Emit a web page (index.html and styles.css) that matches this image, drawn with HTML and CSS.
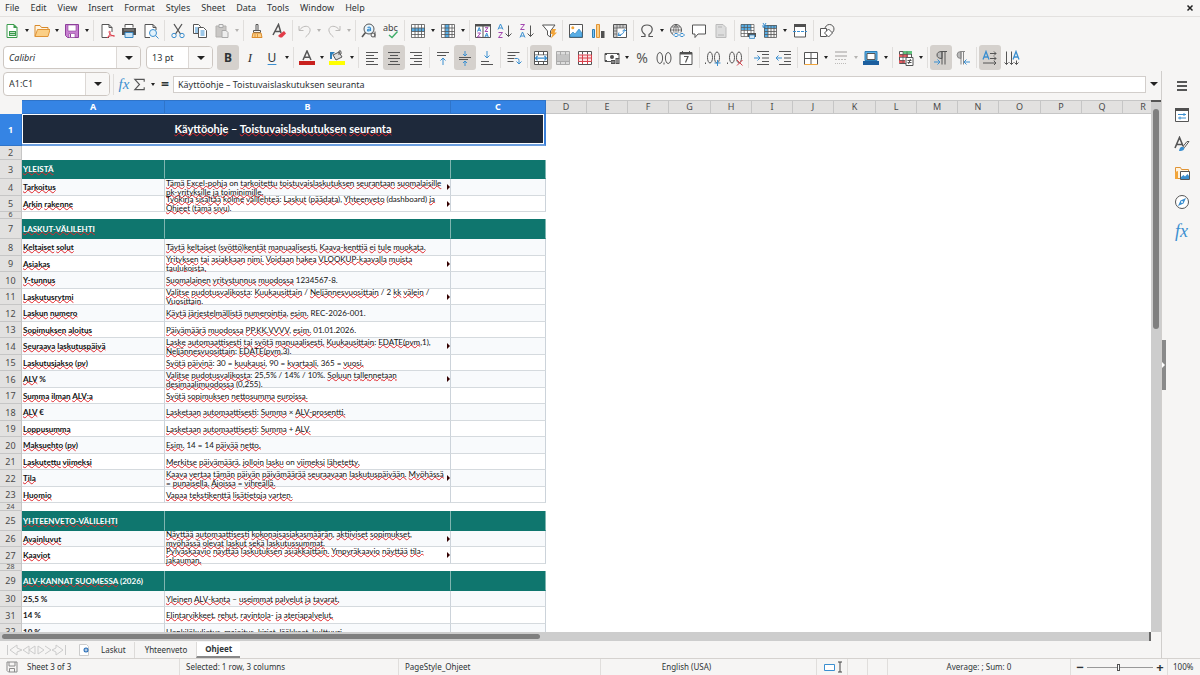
FILE: index.html
```html
<!DOCTYPE html>
<html lang="en">
<head>
<meta charset="utf-8">
<title>Spreadsheet – Ohjeet</title>
<link rel="stylesheet" href="styles.css">
</head>
<body>
<nav class="menubar">
  <button>File</button><button>Edit</button><button>View</button><button>Insert</button><button>Format</button><button>Styles</button><button>Sheet</button><button>Data</button><button>Tools</button><button>Window</button><button>Help</button>
  <button class="close" aria-label="Close document"><svg viewBox="0 0 8 8"><path d="M1.500 1.500l5 5M6.500 1.500l-5 5" stroke="#222" stroke-width="1.500"/></svg></button>
</nav>

<div class="toolbar" role="toolbar" aria-label="Standard">
  <button class="tool" aria-label="New"><svg viewBox="0 0 16 16"><path class="gn" d="M3 1.500h7l3 3v10H3z" fill="#fff"/><path d="M9.500 1v4h4z" fill="#3a9b4c"/><path d="M5 8h7v5H5z" fill="#3a9b4c"/><path d="M6 9.500h5M6 11.500h5" stroke="#fff" stroke-width=".7"/></svg></button><button class="arrow" aria-label="New options"></button>
  <button class="tool" aria-label="Open"><svg viewBox="0 0 16 16"><path d="M1 13.500V2.500h5l1.500 2H14v3" fill="#fff3df" stroke="#d98a2b"/><path d="M1 13.500l2.500-7H16l-2 7z" fill="#fbcf86" stroke="#e09436"/></svg></button><button class="arrow" aria-label="Recent files"></button>
  <button class="tool" aria-label="Save"><svg viewBox="0 0 16 16"><path d="M1.500 1.500h13v13h-11l-2-2z" fill="#c77fd0" stroke="#8e3f9b"/><path d="M4 2h8v6H4z" fill="#fff" stroke="#8e3f9b" stroke-width=".6"/><path d="M5 10.500h6v4H5z" fill="#fff" stroke="#8e3f9b" stroke-width=".6"/><path d="M6.500 11v3" stroke="#8e3f9b"/></svg></button><button class="arrow" aria-label="Save options"></button>
  <span class="sep"></span>
  <button class="tool" aria-label="Export as PDF"><svg viewBox="0 0 16 16"><path class="g" d="M10 14.500H3v-13h7l3 3V9M10 1.500v3h3" fill="#fff"/><path d="M8 15c3-3 4-6 2.500-7-1.500 1 1 5 5 5-3-1-6 0-7.500 2z" fill="none" stroke="#dc3c4a"/></svg></button>
  <button class="tool" aria-label="Print"><svg viewBox="0 0 16 16"><path class="g" d="M4 4.500v-3h8v3" fill="#fff"/><path d="M1 5h14v7H1z" fill="#505050"/><path d="M3 7h10" stroke="#aaa" stroke-width=".8"/><path d="M4 9.500h8v5H4z" fill="#cde6f7" stroke="#3b88c3"/></svg></button>
  <button class="tool" aria-label="Print preview"><svg viewBox="0 0 16 16"><path class="g" d="M7 14.500H2v-13h8l3 3V7M10 1.500v3h3" fill="#fff"/><circle class="b" cx="10" cy="10" r="3.500" fill="#e3f2fb"/><path class="b" d="M12.500 12.500l3 3"/></svg></button>
  <span class="sep"></span>
  <button class="tool" aria-label="Cut"><svg viewBox="0 0 16 16"><path class="g" d="M4 1l6.500 10M12 1L5.500 11" stroke-width="1.300"/><circle class="b" cx="4" cy="12.500" r="2.200"/><circle class="b" cx="12" cy="12.500" r="2.200"/></svg></button>
  <button class="tool" aria-label="Copy"><svg viewBox="0 0 16 16"><path class="g" d="M1.500 1.500h5l2 2v7h-7z" fill="#fff"/><path class="b" d="M3 5h3M3 7h3M3 9h3"/><path class="g" d="M6.500 4.500h5l3 3v7h-8z" fill="#fff"/><path class="b" d="M8.500 8h4M8.500 10h4M8.500 12h4"/></svg></button>
  <button class="tool" aria-label="Paste" disabled><svg viewBox="0 0 16 16"><path d="M2 3h10v11H2z" fill="#c9c7c5" stroke="#b3b1af"/><path d="M5 1.500h4v3H5z" fill="#eee" stroke="#aaa"/><path d="M8 7.500h4l2 2v5H8z" fill="#eee" stroke="#aaa"/></svg></button><button class="arrow off" aria-label="Paste options"></button>
  <span class="sep"></span>
  <button class="tool" aria-label="Clone formatting"><svg viewBox="0 0 16 16"><path class="g" d="M7 1.500h2v6H7zM4.500 7.500h7v2h-7z"/><path d="M4 10h8l1 4.500H3z" fill="#fbd08b" stroke="#dc8b2b"/><path d="M6 11v3M8.500 11v3" stroke="#dc8b2b" stroke-width=".8"/></svg></button>
  <button class="tool" aria-label="Clear formatting"><svg viewBox="0 0 16 16"><path class="g" d="M2 12L7.500 1.500 10 10M4 8.500h5" stroke-width="1.500"/><path d="M9 11l4-3 2 2.500-4 4H9l-2-1.500z" fill="#e23c48"/></svg></button>
  <span class="sep"></span>
  <button class="tool narrow" aria-label="Undo" disabled><svg viewBox="0 0 16 16"><path class="d" d="M2 3v4.500h4.500M2.500 7C7 1 14 3 13 8c-.4 2-2 4-4.500 6"/></svg></button><button class="arrow off" aria-label="Undo list"></button>
  <button class="tool" aria-label="Redo" disabled><svg viewBox="0 0 16 16"><path class="d" d="M14 3v4.500H9.500M13.500 7C9 1 2 3 3 8c.4 2 2 4 4.500 6"/></svg></button><button class="arrow off" aria-label="Redo list"></button>
  <span class="sep"></span>
  <button class="tool" aria-label="Find and replace"><svg viewBox="0 0 16 16"><circle class="g" cx="8" cy="6" r="5" fill="#e9f5fc"/><path class="g" d="M4.500 9.500L1 14" stroke-width="1.600"/><path class="b" d="M6.500 4.500q3-1 3 1v2.500M9.500 6q-3 0-3 1.200t3 .3" stroke-width="1.200"/><circle class="g" cx="12" cy="12" r="2"/><path class="g" d="M14 8.500v6"/></svg></button>
  <button class="tool" aria-label="Spelling"><svg viewBox="0 0 16 16"><text x="0" y="8" class="abc">abc</text><path d="M6 12l3 2.500 5.500-6" fill="none" stroke="#3fae6a" stroke-width="1.400"/></svg></button>
  <span class="sep"></span>
  <button class="tool" aria-label="Row"><svg viewBox="0 0 16 16"><path d="M1.500 1.500h13v13h-13z" fill="#fff"/><path d="M1 5h14v3.500H1z" fill="#58aee6"/><path class="g" d="M1.500 1.500h13v13h-13zM1.500 5h13M1.500 8.500h13M1.500 11.500h13M5 1.500v13M8.200 1.500v13M11.500 1.500v13" stroke-width=".8"/></svg></button><button class="arrow" aria-label="Row options"></button>
  <button class="tool" aria-label="Column"><svg viewBox="0 0 16 16"><path d="M1.500 1.500h13v13h-13z" fill="#fff"/><path d="M5 1h4v14H5z" fill="#58aee6"/><path class="g" d="M1.500 1.500h13v13h-13zM1.500 5h13M1.500 8.500h13M1.500 11.500h13M5 1.500v13M9 1.500v13M12 1.500v13" stroke-width=".8"/></svg></button><button class="arrow" aria-label="Column options"></button>
  <span class="sep"></span>
  <button class="tool" aria-label="Sort"><svg viewBox="0 0 16 16"><path class="g" d="M.5 1.500h15v13H.5zM8 2v12" fill="#fff"/><path d="M0 1h16v2.500H0z" fill="#505050"/><path class="b" d="M2.500 8.500L4.200 4.500l1.600 4M3 7.200h2.500M10 14l1.700-4 1.600 4M10.500 12.800H13"/><path class="p" d="M2.500 10h3l-3 4h3M10 4.700h3l-3 3.800h3"/></svg></button>
  <button class="tool" aria-label="Sort ascending"><svg viewBox="0 0 16 16"><path class="b" d="M1 6.500L3.500 1 6 6.500M2 5h3"/><path class="p" d="M1.500 9.500h4l-4 5h4"/><path class="g" d="M11.500 2.500v11M8.500 10.500l3 3 3-3"/></svg></button>
  <button class="tool" aria-label="Sort descending"><svg viewBox="0 0 16 16"><path class="p" d="M1.500 1.500h4l-4 5h4"/><path class="b" d="M1 14.500L3.500 9 6 14.500M2 13h3"/><path class="g" d="M11.500 2.500v11M8.500 10.500l3 3 3-3"/></svg></button>
  <button class="tool" aria-label="AutoFilter"><svg viewBox="0 0 16 16"><path class="g" d="M1.500 2h12.500L9.500 8v6l-3-2V8z" fill="#fff"/><path d="M11 6h4l-1.500 3.500H16l-6 6 1.500-4.500H9.500z" fill="#f2a53a"/></svg></button>
  <span class="sep"></span>
  <button class="tool" aria-label="Insert image"><svg viewBox="0 0 16 16"><path class="g" d="M1.500 1.500h13v13h-13z" fill="#fff"/><path d="M2 14v-2l3-3 2 2 4-5 3 4v4z" fill="#58aee6" stroke="#2c7fb9" stroke-width=".6"/><circle cx="4.800" cy="4.800" r="1.500" fill="#f2a53a"/></svg></button>
  <button class="tool" aria-label="Insert chart"><svg viewBox="0 0 16 16"><path d="M2.500 6.500h2v8h-2z" fill="#7dc3ee" stroke="#2c7fb9"/><path d="M6.500 1.500h3v13h-3z" fill="#fbcf86" stroke="#e09436"/><path d="M11 8h3.500v7H11z" fill="#505050"/></svg></button>
  <button class="tool" aria-label="Insert pivot table"><svg viewBox="0 0 16 16"><path class="g" d="M1.500 1.500h13v13h-13z" fill="#fff"/><path d="M2 2h12v3H5v9H2z" fill="#c8c8c8"/><path class="g" d="M5 2v12M2 5h12M8 2v3M11 2v3M2 8h3M2 11h3" stroke-width=".7"/><path class="b" d="M7 9.500l-1 3h3M6.500 12q5 0 6-5M10.500 8l2-1.500 2 2"/></svg></button>
  <span class="sep"></span>
  <button class="tool" aria-label="Special character"><svg viewBox="0 0 16 16"><path class="g" d="M2 13.500h4v-2C1 8 2 2 8 2s7 6 2 9.500v2h4" stroke-width="1.200"/></svg></button><button class="arrow" aria-label="Recent characters"></button>
  <button class="tool" aria-label="Insert hyperlink"><svg viewBox="0 0 16 16"><circle class="g" cx="7" cy="7" r="5.500"/><path class="g" d="M7 1.500v11M1.500 7h11M3 4h8M3 10h8M7 1.500q-5 5.500 0 11M7 1.500q5 5.500 0 11" stroke-width=".7"/><path d="M4 9.500h12v5H4z" fill="#f6f5f4"/><path class="b" d="M8.500 10.500H6q-3 1.500 0 3h2.500M11.500 10.500H14q3 1.500 0 3h-2.500M8 12h4"/></svg></button>
  <button class="tool" aria-label="Insert comment"><svg viewBox="0 0 16 16"><path class="g" d="M1.500 2h13v9H7l-3 3.500V11H1.500z" fill="#fff"/></svg></button>
  <button class="tool" aria-label="Headers and footers" disabled><svg viewBox="0 0 16 16"><path d="M3 1.500h7l3 3v10H3z" fill="#ddd" stroke="#bbb"/><path d="M5 4h4M5 12h6" stroke="#b5b5b5"/></svg></button>
  <span class="sep"></span>
  <button class="tool" aria-label="Define print area"><svg viewBox="0 0 16 16"><path d="M1.500 1.500h12v12h-12z" fill="#fff"/><path d="M1 1h10v6H1z" fill="#58aee6"/><path class="g" d="M1 1.500h13v12H1zM1 4.500h13M1 7.500h13M1 10.500h13M4.200 1.500v12M7.500 1.500v12M11 1.500v12" stroke-width=".7" fill-opacity="0" fill="#fff"/><path d="M8 10h8v4H8z" fill="#505050"/><path d="M9.500 12h5v3.500h-5z" fill="#cde6f7" stroke="#3b88c3" stroke-width=".8"/></svg></button>
  <button class="tool" aria-label="Freeze rows and columns"><svg viewBox="0 0 16 16"><path d="M3 2h12v3H6v9H2V5z" fill="#58aee6"/><path class="g" d="M2.500 2.500h12v12h-12zM2.500 5.500h12M2.500 8.500h12M2.500 11.500h12M6 2.500v12M9 2.500v12M12 2.500v12" stroke-width=".8"/><path class="b" d="M0 3h5M1 0l3 5M4 0L1 5"/></svg></button><button class="arrow" aria-label="Freeze options"></button>
  <button class="tool" aria-label="Split window"><svg viewBox="0 0 16 16"><path class="g" d="M2.500 3v11h11V3z" fill="#fff"/><path d="M2 1h12v3H2z" fill="#505050"/><path class="b" d="M1 8.500h14" stroke-dasharray="3 1"/></svg></button>
  <span class="sep"></span>
  <button class="tool" aria-label="Show draw functions"><svg viewBox="0 0 16 16"><circle class="g" cx="10.500" cy="6" r="4.500"/><path class="g" d="M1.500 5.500h6v8h-6z" fill="#fff"/><path class="g" d="M9.500 6l4 4-4 4-4-4z" fill="#fff"/></svg></button>
</div>

<div class="toolbar" role="toolbar" aria-label="Formatting">
  <div class="combo font"><input type="text" value="Calibri" aria-label="Font name"><button aria-label="Choose font"></button></div>
  <div class="combo size"><input type="text" value="13 pt" aria-label="Font size"><button aria-label="Choose size"></button></div>
  <button class="tool on bold" aria-pressed="true">B</button>
  <button class="tool italic">I</button>
  <button class="tool under">U</button><button class="arrow" aria-label="Underline options"></button>
  <span class="sep"></span>
  <button class="tool" aria-label="Font color"><svg viewBox="0 0 16 16"><path class="g" d="M4 10L8 1l4 9M5.200 7.200h5.600" stroke-width="1.500"/><path d="M0 11h16v4H0z" fill="#c9211e"/></svg></button><button class="arrow" aria-label="Font color options"></button>
  <button class="tool" aria-label="Highlighting"><svg viewBox="0 0 16 16"><path class="g" d="M4 5l6-3 3 5-6 3z" fill="#ddd"/><path class="g" d="M10 5V1q2-1 2 1v2"/><path d="M1 2h5L3 5v4H1z" fill="#2d7fbb"/><path d="M0 11h16v4H0z" fill="#ff0"/></svg></button><button class="arrow" aria-label="Highlighting options"></button>
  <span class="sep"></span>
  <button class="tool" aria-label="Align left"><svg viewBox="0 0 16 16"><path class="g" d="M2 2.500h12M2 5.500h8M2 8.500h12M2 11.500h8M2 14.500h12"/></svg></button>
  <button class="tool on" aria-label="Center horizontally"><svg viewBox="0 0 16 16"><path class="g" d="M2 2.500h12M4 5.500h8M2 8.500h12M4 11.500h8M2 14.500h12"/></svg></button>
  <button class="tool" aria-label="Align right"><svg viewBox="0 0 16 16"><path class="g" d="M2 2.500h12M6 5.500h8M2 8.500h12M6 11.500h8M2 14.500h12"/></svg></button>
  <span class="sep"></span>
  <button class="tool" aria-label="Align top"><svg viewBox="0 0 16 16"><path class="g" d="M2 2.500h12M2 5.500h9"/><path class="b" d="M8 15V8M5.500 10.500L8 8l2.500 2.500"/></svg></button>
  <button class="tool on" aria-label="Center vertically"><svg viewBox="0 0 16 16"><path class="g" d="M2 7.500h12M2 9.500h9"/><path class="b" d="M8 1v5M6 4l2 2 2-2M8 16v-5M6 13l2-2 2 2"/></svg></button>
  <button class="tool" aria-label="Align bottom"><svg viewBox="0 0 16 16"><path class="g" d="M2 11.500h8M2 14.500h12"/><path class="b" d="M8 1v7M5.500 5.500L8 8l2.500-2.500"/></svg></button>
  <span class="sep"></span>
  <button class="tool" aria-label="Wrap text"><svg viewBox="0 0 16 16"><path class="g" d="M1.500 2.500h12M1.500 5.500h8M1.500 8.500h7M1.500 11.500h6"/><path class="b" d="M9 8.500h2.500q1.500 0 1.500 2v3M10.500 11.500l2.500 2.500 2.500-2.500"/></svg></button>
  <span class="sep"></span>
  <button class="tool on" aria-label="Merge and center"><svg viewBox="0 0 16 16"><path class="g" d="M1.500 1.500h13v13h-13zM1.500 5h13M1.500 11.500h13M5.500 1.500V5M10.500 1.500V5M5.500 11.500v3M10.500 11.500v3" fill="#fff"/><path d="M2 5.500h12v5.500H2z" fill="#fff"/><path class="b" d="M2 8.200h12M4.500 6l-2 2.200 2 2.200M11.500 6l2 2.200-2 2.200" stroke-width="1.300"/></svg></button>
  <button class="tool" aria-label="Merge cells" disabled><svg viewBox="0 0 16 16"><path d="M1.500 1.500h13v13h-13zM1.500 5h13M1.500 11.500h13M5.500 1.500V5M10.500 1.500V5M5.500 11.500v3M10.500 11.500v3" fill="#ddd" stroke="#aaa"/><path d="M2 5.500h12v5.500H2z" fill="#c4c4c4"/></svg></button>
  <button class="tool" aria-label="Unmerge cells"><svg viewBox="0 0 16 16"><path class="g" d="M1.500 1.500h13v13h-13zM5.500 1.500v3M10.500 1.500v3" fill="#fff"/><path d="M1.500 5h13v6.500h-13zM5.500 5v9M10.500 5v9M1.500 8h13" fill="#fbe2e2" stroke="#d8404c"/></svg></button>
  <span class="sep"></span>
  <button class="tool" aria-label="Format as currency"><svg viewBox="0 0 16 16"><path class="g" d="M8 11.500H1v-8h14v5" fill="#fff"/><circle cx="8" cy="7" r="2" fill="#505050"/><path d="M1 3h2v2H1zM13 3h2v2h-2zM1 10h2v2H1zM7 10h4v4H7zM11.500 8h4v6h-4z" fill="#505050"/><path d="M7.500 12h3M12 10h3M12 12h3" stroke="#ddd" stroke-width=".8"/></svg></button><button class="arrow" aria-label="Currency options"></button>
  <button class="tool glyph" aria-label="Format as percent">%</button>
  <button class="tool" aria-label="Format as number"><svg viewBox="0 0 16 16"><ellipse class="g" cx="3.800" cy="8" rx="2.800" ry="5.500"/><ellipse class="g" cx="12.200" cy="8" rx="2.800" ry="5.500"/><path class="g" d="M8 12.500v2"/></svg></button>
  <button class="tool" aria-label="Format as date"><svg viewBox="0 0 16 16"><path class="g" d="M2 2.500h12v12H2zM4.500 1v2M11.500 1v2" fill="#fff"/><path d="M2 2h12v2.500H2z" fill="#505050"/><path class="g" d="M6 6.500h4l-2.500 6" stroke-width="1.200"/></svg></button>
  <span class="sep"></span>
  <button class="tool" aria-label="Add decimal place"><svg viewBox="0 0 16 16"><path class="g" d="M.5 12.500v1.500"/><ellipse class="g" cx="5" cy="7.500" rx="2.500" ry="5.500"/><ellipse class="g" cx="12" cy="7.500" rx="2.500" ry="5.500"/><path class="b" d="M12.500 10v6M9.500 13h6"/></svg></button>
  <button class="tool" aria-label="Delete decimal place"><svg viewBox="0 0 16 16"><path class="g" d="M.5 12.500v1.500"/><ellipse class="g" cx="5" cy="7.500" rx="2.500" ry="5.500"/><ellipse class="g" cx="12" cy="7.500" rx="2.500" ry="5.500"/><path d="M10 10l5.500 5.500M15.500 10L10 15.500" stroke="#d8404c"/></svg></button>
  <span class="sep"></span>
  <button class="tool" aria-label="Increase indent"><svg viewBox="0 0 16 16"><path class="g" d="M3 1.500h12M8 4.500h7M8 8h7M8 11.500h7M3 14.500h12"/><path class="b" d="M0 8h6M3.500 5.500L6 8l-2.500 2.500"/></svg></button>
  <button class="tool" aria-label="Decrease indent"><svg viewBox="0 0 16 16"><path class="g" d="M3 1.500h12M8 4.500h7M8 8h7M8 11.500h7M3 14.500h12"/><path class="b" d="M0 8h6M2.500 5.500L0 8l2.500 2.500"/></svg></button>
  <span class="sep"></span>
  <button class="tool" aria-label="Borders"><svg viewBox="0 0 16 16"><path class="g" d="M1.500 14.500v-12h13v12M8 2.500v12M1.500 8.500h13" fill="#fff"/><path d="M1.500 14.500h13" stroke="#f2a53a"/></svg></button><button class="arrow" aria-label="Border options"></button>
  <button class="tool" aria-label="Border style" disabled><svg viewBox="0 0 16 16"><path class="d" d="M2 2h12M2 6h12" stroke-width="1.600"/><path class="d" d="M2 9.500h12" stroke-dasharray="2 1"/><path class="d" d="M2 13.500h12" stroke-dasharray="1 1"/></svg></button><button class="arrow off" aria-label="Border style options"></button>
  <button class="tool" aria-label="Border color"><svg viewBox="0 0 16 16"><path d="M2 1.500h12v9H2z" fill="#58aee6" stroke="#2c7fb9"/><path class="g" d="M4 3.500h8v6H4z" fill="#fff"/><path d="M0 11h16v4H0z" fill="#1d5f9f"/></svg></button><button class="arrow" aria-label="Border color options"></button>
  <span class="sep"></span>
  <button class="tool" aria-label="Conditional formatting"><svg viewBox="0 0 16 16"><path class="g" d="M1.500 1.500h12v12h-12z" fill="#fff"/><path d="M5 1h9v3H5z" fill="#5fc27c"/><path d="M1 4h9v3H1z" fill="#e55a60"/><path d="M1 10h6v3H1z" fill="#e55a60"/><path class="g" d="M1.500 4.500h12M1.500 7.500h12M1.500 10.500h5M5 1.500v12M9 1.500v6" stroke-width=".7"/><path class="g" d="M8 7.500h7v8H8z" fill="#fff"/><path class="g" d="M9.500 10.500h4M9.500 12.500h4M12.500 9l-2 5"/></svg></button><button class="arrow" aria-label="Conditional options"></button>
  <span class="sep"></span>
  <button class="tool on" aria-label="Left-to-right"><svg viewBox="0 0 16 16"><path d="M9 1.500q-5 0-5 3.500t5 3.500z" fill="#bbb" stroke="#555"/><path class="g" d="M9 1.500h5M9 1.500v13M12 1.500v13"/><path class="b" d="M1 12h6M4.500 9.500L7 12l-2.500 2.500"/></svg></button>
  <button class="tool" aria-label="Right-to-left"><svg viewBox="0 0 16 16"><path d="M6 1.500q-4 0-4 3.500t4 3.500z" fill="#bbb" stroke="#888"/><path d="M6 1.500h4M6 1.500v13M8.500 1.500v13" stroke="#888"/><path class="b" d="M9 12h6M11.500 9.500L9 12l2.500 2.500"/></svg></button>
  <span class="sep"></span>
  <button class="tool on" aria-label="Text direction horizontal"><svg viewBox="0 0 16 16"><path class="b" d="M1 9.500L4 1.500l3 8M2 7h4" stroke-width="1.300"/><path class="g" d="M8 3.500h6M12 1.500l2 2-2 2M8 8.500h6M12 6.500l2 2-2 2M1 13h13M12 11l2 2-2 2"/></svg></button>
  <button class="tool" aria-label="Text direction vertical"><svg viewBox="0 0 16 16"><path class="b" d="M9 9.500l3-8 3 8M10 7h4" stroke-width="1.300"/><path class="g" d="M2.500 1.500v13M.5 12.500l2 2 2-2M7.500 1.500v13M5.500 12.500l2 2 2-2M12.500 10.500v4M10.500 12.500l2 2 2-2"/></svg></button>
</div>

<div class="main">
  <section class="work">
    <div class="formula">
      <div class="combo name"><input type="text" value="A1:C1" aria-label="Name box"><button aria-label="Choose range"></button></div>
      <span class="sep"></span>
      <button class="fx" aria-label="Function wizard"><i>fx</i></button>
      <button class="sum" aria-label="Select function"><svg viewBox="0 0 16 16"><path class="g" d="M13 5V2.500H3L8 8l-5 5.500h10V11" stroke-width="1.200"/></svg></button><button class="arrow" aria-label="Function list"></button>
      <button class="eq" aria-label="Formula">=</button>
      <input class="line" type="text" value="Käyttöohje – Toistuvaislaskutuksen seuranta" aria-label="Input line">
      <button class="expand" aria-label="Expand formula bar"></button>
    </div>

    <div class="gridwrap">
      <div class="sheet">
        <table>
          <colgroup><col class="rh"><col class="a"><col class="b2"><col class="c"><col class="n" span="3"><col class="w"><col class="n" span="3"><col class="w"><col class="n" span="3"><col class="w"><col class="n" span="3"></colgroup>
          <thead><tr><th class="corner"></th><th class="act">A</th><th class="act">B</th><th class="act">C</th><th>D</th><th>E</th><th>F</th><th>G</th><th>H</th><th>I</th><th>J</th><th>K</th><th>L</th><th>M</th><th>N</th><th>O</th><th>P</th><th>Q</th><th>R</th></tr></thead>
          <tbody>
            <tr class="r1"><th class="act">1</th><td colspan="3" class="title"><div><u>Käyttöohje</u> – <u>Toistuvaislaskutuksen</u> <u>seuranta</u></div></td></tr>
            <tr class="r2"><th>2</th></tr>
            <tr class="sec"><th>3</th><td><u>YLEISTÄ</u></td><td></td><td></td></tr>
            <tr class="alt"><th>4</th><td><u>Tarkoitus</u></td><td class="more"><div><u>Tämä</u> <u>Excel-pohja</u> on <u>tarkoitettu</u> <u>toistuvaislaskutuksen</u> <u>seurantaan</u> <u>suomalaisille</u><br><u>pk-yrityksille</u> <u>ja</u> <u>toiminimille.</u></div></td><td></td></tr>
            <tr class="s"><th>5</th><td><u>Arkin</u> <u>rakenne</u></td><td class="more"><div><u>Työkirja</u> <u>sisältää</u> <u>kolme</u> <u>välilehteä</u>: <u>Laskut</u> (<u>päädata</u>), <u>Yhteenveto</u> (dashboard) <u>ja</u><br><u>Ohjeet</u> (<u>tämä</u> <u>sivu</u>).</div></td><td></td></tr>
            <tr class="gap"><th>6</th></tr>
            <tr class="sec l"><th>7</th><td><u>LASKUT-VÄLILEHTI</u></td><td></td><td></td></tr>
            <tr class="alt"><th>8</th><td><u>Keltaiset</u> <u>solut</u></td><td><u>Täytä</u> <u>keltaiset</u> (<u>syöttö</u>)<u>kentät</u> <u>manuaalisesti.</u> <u>Kaava-kenttiä</u> <u>ei</u> <u>tule</u> <u>muokata.</u></td><td></td></tr>
            <tr class="s"><th>9</th><td><u>Asiakas</u></td><td class="more"><div><u>Yrityksen</u> <u>tai</u> <u>asiakkaan</u> <u>nimi.</u> <u>Voidaan</u> <u>hakea</u> <u>VLOOKUP-kaavalla</u> <u>muista</u><br><u>taulukoista.</u></div></td><td></td></tr>
            <tr class="alt"><th>10</th><td><u>Y-tunnus</u></td><td><u>Suomalainen</u> <u>yritystunnus</u> <u>muodossa</u> 1234567-8.</td><td></td></tr>
            <tr class="s"><th>11</th><td><u>Laskutusrytmi</u></td><td class="more"><div><u>Valitse</u> <u>pudotusvalikosta</u>: <u>Kuukausittain</u> / <u>Neljännesvuosittain</u> / 2 <u>kk</u> <u>välein</u> /<br><u>Vuosittain.</u></div></td><td></td></tr>
            <tr class="alt"><th>12</th><td><u>Laskun</u> <u>numero</u></td><td><u>Käytä</u> <u>järjestelmällistä</u> <u>numerointia</u>, <u>esim.</u> REC-2026-001.</td><td></td></tr>
            <tr class="s"><th>13</th><td><u>Sopimuksen</u> <u>aloitus</u></td><td><u>Päivämäärä</u> <u>muodossa</u> <u>PP.KK.VVVV</u>, <u>esim.</u> 01.01.2026.</td><td></td></tr>
            <tr class="alt"><th>14</th><td><u>Seuraava</u> <u>laskutuspäivä</u></td><td class="more"><div><u>Laske</u> <u>automaattisesti</u> <u>tai</u> <u>syötä</u> <u>manuaalisesti.</u> <u>Kuukausittain</u>: <u>EDATE(pvm</u>,1),<br><u>Neljännesvuosittain</u>: <u>EDATE(pvm</u>,3).</div></td><td></td></tr>
            <tr class="s"><th>15</th><td><u>Laskutusjakso</u> (<u>pv</u>)</td><td><u>Syötä</u> <u>päivinä</u>: 30 = <u>kuukausi</u>, 90 = <u>kvartaali</u>, 365 = <u>vuosi.</u></td><td></td></tr>
            <tr class="alt"><th>16</th><td><u>ALV</u> %</td><td class="more"><div><u>Valitse</u> <u>pudotusvalikosta</u>: 25,5% / 14% / 10%. <u>Soluun</u> <u>tallennetaan</u><br><u>desimaalimuodossa</u> (0,255).</div></td><td></td></tr>
            <tr class="s"><th>17</th><td><u>Summa</u> <u>ilman</u> <u>ALV:a</u></td><td><u>Syötä</u> <u>sopimuksen</u> <u>nettosumma</u> <u>euroissa.</u></td><td></td></tr>
            <tr class="alt"><th>18</th><td><u>ALV</u> €</td><td><u>Lasketaan</u> <u>automaattisesti</u>: <u>Summa</u> × <u>ALV-prosentti.</u></td><td></td></tr>
            <tr class="s"><th>19</th><td><u>Loppusumma</u></td><td><u>Lasketaan</u> <u>automaattisesti</u>: <u>Summa</u> + <u>ALV.</u></td><td></td></tr>
            <tr class="alt"><th>20</th><td><u>Maksuehto</u> (<u>pv</u>)</td><td><u>Esim.</u> 14 = 14 <u>päivää</u> <u>netto.</u></td><td></td></tr>
            <tr class="s"><th>21</th><td><u>Laskutettu</u> <u>viimeksi</u></td><td><u>Merkitse</u> <u>päivämäärä</u>, <u>jolloin</u> <u>lasku</u> on <u>viimeksi</u> <u>lähetetty.</u></td><td></td></tr>
            <tr class="alt"><th>22</th><td><u>Tila</u></td><td class="more"><div><u>Kaava</u> <u>vertaa</u> <u>tämän</u> <u>päivän</u> <u>päivämäärää</u> <u>seuraavaan</u> <u>laskutuspäivään.</u> <u>Myöhässä</u><br>= <u>punaisella.</u> <u>Ajoissa</u> = <u>vihreällä.</u></div></td><td></td></tr>
            <tr class="s"><th>23</th><td><u>Huomio</u></td><td><u>Vapaa</u> <u>tekstikenttä</u> <u>lisätietoja</u> <u>varten.</u></td><td></td></tr>
            <tr class="gap l"><th>24</th></tr>
            <tr class="sec l"><th>25</th><td><u>YHTEENVETO-VÄLILEHTI</u></td><td></td><td></td></tr>
            <tr class="alt s"><th>26</th><td><u>Avainluvut</u></td><td class="more"><div><u>Näyttää</u> <u>automaattisesti</u> <u>kokonaisasiakasmäärän</u>, <u>aktiiviset</u> <u>sopimukset</u>,<br><u>myöhässä</u> <u>olevat</u> <u>laskut</u> <u>sekä</u> <u>laskutussummat.</u></div></td><td></td></tr>
            <tr><th>27</th><td><u>Kaaviot</u></td><td class="more"><div><u>Pylväskaavio</u> <u>näyttää</u> <u>laskutuksen</u> <u>asiakkaittain.</u> <u>Ympyräkaavio</u> <u>näyttää</u> <u>tila-</u><br><u>jakauman.</u></div></td><td></td></tr>
            <tr class="gap"><th>28</th></tr>
            <tr class="sec l"><th>29</th><td><u>ALV-KANNAT SUOMESSA</u> (2026)</td><td></td><td></td></tr>
            <tr class="alt s"><th>30</th><td>25,5 %</td><td><u>Yleinen</u> <u>ALV-kanta</u> – <u>useimmat</u> <u>palvelut</u> <u>ja</u> <u>tavarat.</u></td><td></td></tr>
            <tr><th>31</th><td>14 %</td><td><u>Elintarvikkeet</u>, <u>rehut</u>, <u>ravintola</u>- <u>ja</u> <u>ateriapalvelut.</u></td><td></td></tr>
            <tr class="alt s"><th>32</th><td>10 %</td><td><u>Henkilökuljetus</u>, <u>majoitus</u>, <u>kirjat</u>, <u>lääkkeet</u>, <u>kulttuuri.</u></td><td></td></tr>
          </tbody>
        </table>
      </div>
      <div class="vscroll"><span></span></div>
    </div>
    <div class="hscroll"><span></span></div>

    <div class="tabs">
      <div class="nav"><svg viewBox="0 0 62 12"><path d="M2.500 1v10M12 1L5 6l7 5V8l5-2-5-2zM24 2l-6 4 6 4V2M30 2l-6 4 6 4zM33 2l6 4-6 4zM40 2l6 4-6 4M51 1l7 5-7 5V8l-4-2 4-2zM60.500 1v10" fill="none" stroke="#ccc"/></svg></div>
      <button class="add" aria-label="Add sheet"><svg viewBox="0 0 14 14"><path d="M2.500 1.500h7l2 2v9h-9z" fill="#fff" stroke="#ccc"/><circle cx="9" cy="7" r="2.500" fill="#2a6fb8"/><path d="M9 5.500v3M7.500 7h3" stroke="#fff" stroke-width=".8"/></svg></button>
      <button class="tab">Laskut</button><button class="tab">Yhteenveto</button><button class="tab cur">Ohjeet</button>
    </div>
  </section>

  <div class="splitter"><span></span></div>
  <aside class="sidebar">
    <button aria-label="Sidebar settings"><svg viewBox="0 0 16 16"><path d="M3 4h10M3 8h10M3 12h10" stroke="#222" stroke-width="1.500"/></svg></button>
    <button aria-label="Properties"><svg viewBox="0 0 16 16"><path class="g" d="M1.500 2.500h13v12h-13z" fill="#fff"/><path d="M1 1h14v3H1z" fill="#505050"/><path class="b" d="M4 7.500h8M4 11h8M10 6v3M6 9.500v3"/></svg></button>
    <button aria-label="Styles"><svg viewBox="0 0 16 16"><path class="g" d="M1 12L5.500 1.500 9 10M2.800 8.500h5" stroke-width="1.600"/><path class="g" d="M15 5.500l-4.500 6-1.500-1L13 5.500z" fill="#fff"/><path d="M5 15q1-5 4-4l1.500 1Q10 15.500 5 15z" fill="#3b8fd0"/></svg></button>
    <button aria-label="Gallery"><svg viewBox="0 0 16 16"><path d="M1.500 13.500v-11h5l1 2h7v9z" fill="#fff3df" stroke="#e09436"/><path d="M1 7l3-1v8H1z" fill="#f2a53a"/><path class="g" d="M6.500 6.500h9v8h-9z" fill="#fff"/><path d="M7 14v-2l2.500-2 1.500 1.500L13.500 9l1.500 2v3z" fill="#3b8fd0"/></svg></button>
    <button aria-label="Navigator"><svg viewBox="0 0 16 16"><circle class="g" cx="8" cy="8" r="6.500" fill="#fff"/><path d="M12 4L9.500 9.500 4 12l2.500-5.500z" fill="#3b8fd0"/><circle cx="8" cy="8" r="1" fill="#fff"/></svg></button>
    <button class="fx big" aria-label="Functions"><i>fx</i></button>
  </aside>
</div>

<footer class="status">
  <span class="st save"><svg viewBox="0 0 12 12"><path d="M1 1h10v10H2.500L1 9.500zM3 1v4h6V1M3.500 11V7.500h5V11" fill="none" stroke="#8b8b8b"/></svg></span>
  <span class="st s1">Sheet 3 of 3</span>
  <span class="st s2">Selected: 1 row, 3 columns</span>
  <span class="st s3">PageStyle_Ohjeet</span>
  <span class="st s4">English (USA)</span>
  <span class="st s5"><svg viewBox="0 0 20 12"><path d="M1.500 3.500h10v6h-10z" fill="#fff" stroke="#3b8fd0"/><path d="M15 1h4M17 1v10M15 11h4" stroke="#444" fill="none"/></svg></span>
  <span class="st s6"></span><span class="st s6"></span>
  <span class="st s7">Average: ; Sum: 0</span>
  <span class="st zoom"><button aria-label="Zoom out">−</button><input type="range" min="0" max="100" value="48" aria-label="Zoom"><button aria-label="Zoom in">+</button></span>
  <span class="st s8">100%</span>
</footer>
</body>
</html>
```
FILE: styles.css
```css
* { box-sizing: border-box; }
body {
  margin: 0;
  height: 100vh;
  display: flex;
  flex-direction: column;
  overflow: hidden;
  background: #f6f5f4;
  color: #2e3436;
  font: 9px/12px "Noto Sans", "Open Sans", sans-serif;
}
button, input { font: inherit; color: inherit; margin: 0; padding: 0; border: 0; background: none; min-width: 0; }
svg { display: block; }
.g { stroke: #555; }
.b { stroke: #3b8fd0; }
.d { stroke: #bdbbb9; }
.p { stroke: #a347b0; }
.gn { stroke: #3a9b4c; }
path.b, path.d, path.p, path.g:not([fill]), circle.b:not([fill]), circle.g:not([fill]), ellipse.g { fill: none; }
.abc { font: 9px "Noto Sans", sans-serif; fill: #444; }

.menubar { display: flex; align-items: center; height: 17px; border-bottom: 1px solid #e3e1df; padding: 0 6px 0 0; gap: 1px; flex: none; }
.menubar button { padding: 0 5px; line-height: 16px; }
.menubar .close { margin-left: auto; padding: 0; }
.close svg { width: 8px; height: 8px; }

.toolbar { display: flex; align-items: center; height: 27px; padding-left: 1px; flex: none; }
.tool { width: 22px; height: 25px; flex: none; display: flex; align-items: center; justify-content: center; border-radius: 3px; }
.tool.narrow { width: 20px; }
.tool svg { width: 16px; height: 16px; }
.tool.on { background: #d5d1cd; }
.arrow { width: 8px; height: 22px; flex: none; display: flex; align-items: center; justify-content: center; }
.arrow::before, .combo button::before, .expand::before { content: ""; border: 2px solid transparent; border-top: 3px solid #222; border-bottom: 0; }
.arrow.off::before { border-top-color: #b5b3b1; }
.combo button::before, .expand::before { border-width: 4px 4px 0; }
.sep { width: 1px; height: 21px; margin: 0 2px; background: #e0dedc; flex: none; }
.bold { font-size: 12px; font-weight: 700; }
.italic { font: italic 13px "Liberation Serif", serif; }
.under { font-size: 12px; text-decoration: underline #3b8fd0; text-underline-offset: 2px; }
.glyph { font-size: 14px; color: #555; }

.combo { display: flex; height: 23px; border: 1px solid #cdc7c2; border-radius: 4px; background: #fff; flex: none; overflow: hidden; }
.combo input { flex: 1; padding-left: 5px; }
.combo button { width: 24px; border-left: 1px solid #dcd8d5; background: #f8f7f6; display: flex; align-items: center; justify-content: center; }
.combo.font { width: 138px; margin: 0 5px 0 2px; }
.combo.font input { font-style: italic; }
.combo.size { width: 67px; margin-right: 4px; }
.combo.name { width: 107px; margin: 0 1px 0 3px; }

.main { display: flex; flex: 1; min-height: 0; }
.work { flex: 1; min-width: 0; display: flex; flex-direction: column; }
.formula { display: flex; align-items: center; height: 29px; flex: none; padding-bottom: 3px; }
.formula .combo { height: 24px; }
.fx { width: 16px; font: 15px/20px "Liberation Serif", serif; color: #3b8fd0; }
.sum svg { width: 15px; height: 15px; }
.formula .arrow { margin-left: 2px; }
.eq { width: 14px; font-size: 14px; line-height: 16px; margin: 0 1px 0 1px; font-weight: 700; }
.formula .line { flex: 1; height: 17px; border: 1px solid #d2cecb; background: #fff; padding-left: 4px; }
.expand { width: 15px; display: flex; justify-content: center; }

.gridwrap { display: flex; flex: 1; min-height: 0; }
.sheet { flex: 1; min-width: 0; overflow: hidden; background: #fff; }
table { table-layout: fixed; width: 1164px; border-collapse: separate; border-spacing: 0; }
.rh { width: 22px; }
.a { width: 143px; }
.b2 { width: 286px; }
.c { width: 95px; }
.n { width: 41px; }
.w { width: 42px; }
th { padding: 0; background: #e2e1e0; font-weight: 400; color: #4a4a4a; border-right: 1px solid #c6c6c6; border-bottom: 1px solid #c6c6c6; }
thead th { height: 14px; line-height: 12px; border-top: 1px solid #c6c6c6; }
.act { background: #3584e4; color: #fff; font-weight: 700; border-color: #2f74c9; }
thead .corner { background: #f6f5f4; border-color: #f6f5f4; }
tbody tr { height: 17px; }
tbody tr.s { height: 16px; }
tbody th { line-height: 12px; padding-top: 1px; }
td { position: relative; padding: 0 0 0 1px; border-right: 1px solid #ccd3da; border-bottom: 1px solid #d5dade; font: 8px/10px Lato, Carlito, sans-serif; color: #111; white-space: nowrap; }
td:nth-child(2) { font-weight: 700; }
.alt td { background: #f8fafc; }
tbody .r1 { height: 32px; }
tbody .r2 { height: 14px; }
tbody .sec { height: 19px; }
tbody .sec.l { height: 20px; }
tbody .gap { height: 7px; }
tbody .gap.l { height: 8px; }
.gap th { font-size: 7px; line-height: 6px; padding: 0; }
.sec td { background: #0f766e; color: #fff; border-color: #0f766e #7fb5b0 #0f766e #0f766e; }
td u { text-decoration: underline wavy #e0262b 1px; text-decoration-skip-ink: none; text-underline-offset: -1px; }
.more div { line-height: 9px; margin: -1px 0 -2px; }
.more::after { content: ""; position: absolute; right: 0; top: 5px; border: 3px solid transparent; border-left-color: #300; border-right: 0; }
tbody .title { padding: 1px 0 0 1px; border: 0; border-right: 2px solid #3a7fd8; border-bottom: 2px solid #6c9fe0; text-align: center; }
.title div { background: #1e293b; color: #fff; font-size: 11px; font-weight: 700; line-height: 28px; margin: 0 1px 1px 0; }

.vscroll { width: 10px; background: #cdcdcd; padding: 7px 2px 0; border-top: 2px solid #555; flex: none; }
.vscroll span { display: block; height: 42%; border-radius: 3px; background: #7f7f7f; }
.hscroll { height: 9px; background: #cdcdcd; padding: 2px; margin-right: 10px; border-right: 2px solid #666; flex: none; }
.hscroll span { display: block; width: 47%; height: 5px; border-radius: 3px; background: #7f7f7f; }

.tabs { display: flex; align-items: center; height: 17px; flex: none; font-size: 8px; }
.nav { width: 62px; margin: 0 10px 0 5px; }
.add svg { width: 14px; height: 14px; }
.tab { height: 16px; padding: 0 8px 0 10px; }
.tab + .tab { border-left: 1px solid #dddbd9; }
.tab.cur { padding: 0 8px; margin-left: 1px; font-weight: 700; background: #fff; border-bottom: 2px solid #888; }

.splitter { width: 5px; flex: none; border-left: 1px solid #d0cecc; display: flex; align-items: center; }
.splitter span { width: 4px; height: 50px; background: #8a8a8a; display: flex; align-items: center; }
.splitter span::before { content: ""; border: 3px solid transparent; border-left: 3px solid #fff; border-right: 0; }
.sidebar { width: 34px; flex: none; display: flex; flex-direction: column; align-items: center; padding-right: 3px; }
.sidebar button { height: 29px; display: flex; align-items: center; justify-content: center; }
.sidebar svg { width: 16px; height: 16px; }
.sidebar .big { font-size: 18px; }

.status { display: flex; height: 17px; border-top: 1px solid #d5d2cf; flex: none; font-size: 8px; line-height: 16px; }
.st { flex: none; border-right: 1px solid #e0dedc; padding-left: 6px; white-space: nowrap; }
.st svg { height: 12px; margin-top: 2px; }
.save { width: 21px; border: 0; }
.s1 { flex: 159 1 159px; }
.s2 { flex: 219 1 219px; }
.s3 { flex: 202 1 202px; }
.s4 { flex: 216 1 216px; text-align: center; padding-right: 50px; }
.s5 { width: 31px; }
.s6 { width: 20px; }
.s7 { flex: 183 1 183px; text-align: center; padding: 0; }
.zoom { display: flex; align-items: center; width: 97px; padding-left: 4px; }
.zoom button { font-size: 13px; line-height: 14px; font-weight: 700; width: 10px; }
.zoom input { width: 66px; height: 12px; margin: 0 2px; appearance: none; background: linear-gradient(#999, #999) center / 100% 1px no-repeat; }
.zoom input::-webkit-slider-thumb { appearance: none; width: 3px; height: 7px; border: 1px solid #555; background: #fff; }
.s8 { width: 32px; padding-left: 5px; border: 0; }
```
